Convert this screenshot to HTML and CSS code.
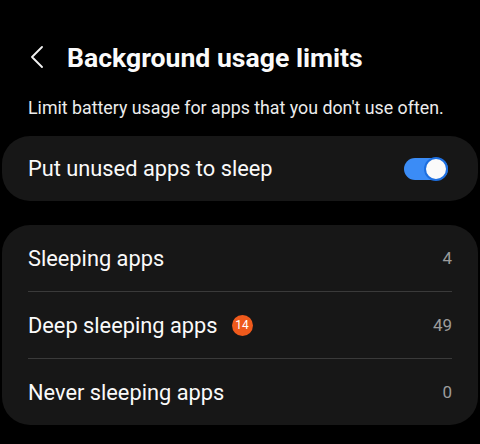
FILE: index.html
```html
<!DOCTYPE html>
<html lang="en">
<head>
  <meta charset="UTF-8" />
  <meta name="viewport" content="width=device-width, initial-scale=1.0" />
  <title>Background usage limits</title>
  <link rel="stylesheet" href="styles.css">
</head>
<body>
  <header class="top-bar">
    <svg class="back" width="14" height="22" viewBox="0 0 14 22">
      <path d="M12 1 L2 11 L12 21" fill="none" stroke="#f2f2f2" stroke-width="1.8" stroke-linecap="round" stroke-linejoin="round"/>
    </svg>
    <h1>Background usage limits</h1>
  </header>

  <p class="desc">Limit battery usage for apps that you don't use often.</p>

  <section class="card switch-card">
    <span class="label">Put unused apps to sleep</span>
    <span class="toggle"><span class="thumb"></span></span>
  </section>

  <section class="card list-card">
    <div class="row">
      <span class="label">Sleeping apps</span>
      <span class="count">4</span>
    </div>
    <div class="row">
      <span class="label">Deep sleeping apps</span>
      <span class="badge">14</span>
      <span class="count">49</span>
    </div>
    <div class="row">
      <span class="label">Never sleeping apps</span>
      <span class="count">0</span>
    </div>
  </section>
</body>
</html>
```

FILE: styles.css
```css
body {
  margin: 0;
  background: #000;
  color: #fafafa;
  font-family: Roboto, "Noto Sans", sans-serif;
}
.top-bar {
  display: flex;
  align-items: center;
  height: 22px;
  padding: 46px 0 0 30px;
}
.back {
  display: block;
}
.top-bar h1 {
  margin: 0 0 0 23px;
  font-size: 26.6px;
  font-weight: 700;
  letter-spacing: 0;
}
.desc {
  margin: 29px 0 0 28px;
  font-size: 17.8px;
  color: #ececec;
}
.card {
  background: #171717;
  border-radius: 28px;
  margin: 0 2px;
}
.switch-card {
  margin-top: 18px;
  height: 65px;
  display: flex;
  align-items: center;
  padding: 0 30px 0 26px;
}
.label {
  font-size: 21.8px;
}
.toggle {
  margin-left: auto;
  position: relative;
  width: 44px;
  height: 22px;
  border-radius: 11px;
  background: #3b8cf6;
}
.thumb {
  position: absolute;
  top: -1px;
  right: 0;
  width: 20px;
  height: 20px;
  border-radius: 50%;
  background: #fafafa;
  border: 2px solid #1d6fe0;
}
.list-card {
  margin-top: 24px;
  padding: 0 26px;
}
.row {
  display: flex;
  align-items: center;
  height: 66px;
}
.row + .row {
  border-top: 1px solid #3a3a3a;
}
.badge {
  margin-left: 14px;
  width: 21px;
  height: 21px;
  border-radius: 50%;
  background: #ef5a1c;
  color: #fff;
  font-size: 12px;
  display: flex;
  align-items: center;
  justify-content: center;
}
.count {
  margin-left: auto;
  font-size: 17px;
  color: #9c9c9c;
}
```
